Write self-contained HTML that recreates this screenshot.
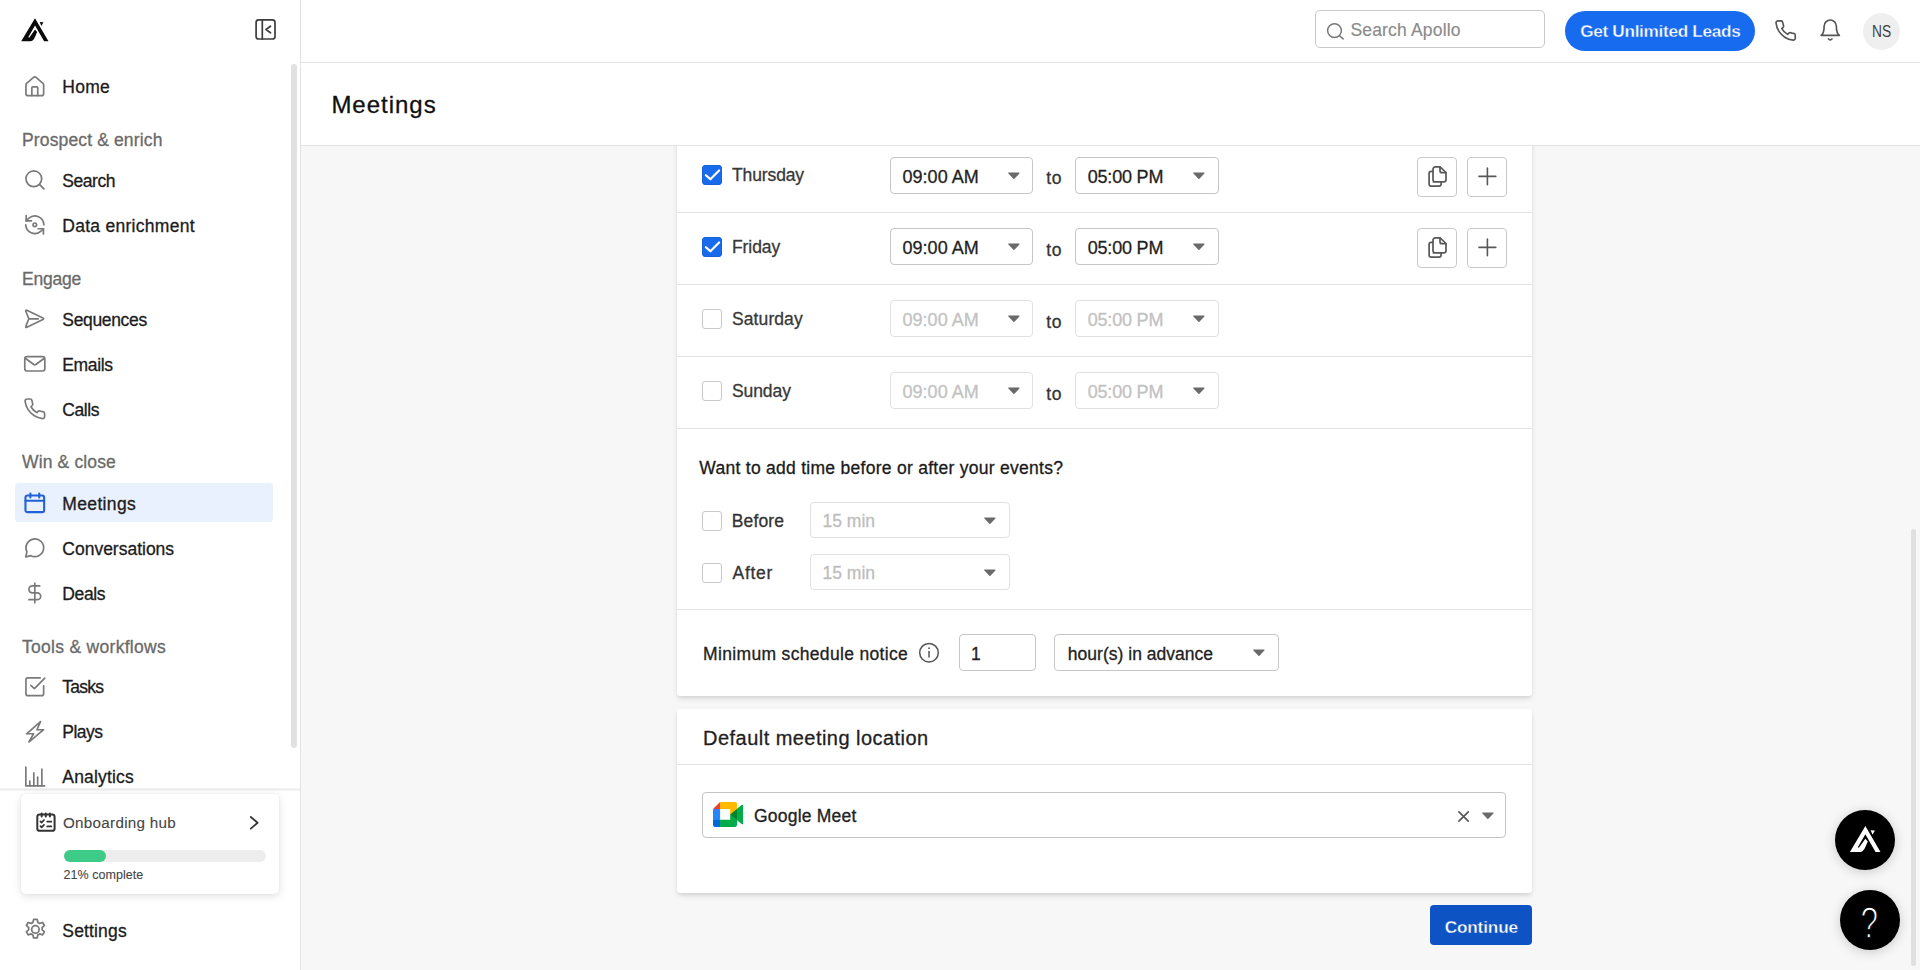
<!DOCTYPE html>
<html lang="en">
<head>
<meta charset="utf-8">
<title>Meetings - Apollo</title>
<style>
*{box-sizing:border-box;margin:0;padding:0}
html,body{width:1920px;height:970px;overflow:hidden;background:#f7f7f7;font-family:"Liberation Sans", sans-serif;color:#1a1a1a}
.abs{position:absolute}
.t{position:absolute;white-space:nowrap;line-height:20px;height:20px;-webkit-text-stroke:0.3px currentColor}
#sidebar{position:absolute;left:0;top:0;width:301px;height:970px;background:#fff;border-right:1px solid #e2e2e2}
#topbar{position:absolute;left:301px;top:0;width:1619px;height:63px;background:#fff;border-bottom:1px solid #e4e4e4}
#titlebar{position:absolute;left:301px;top:63px;width:1619px;height:83px;background:#fff;border-bottom:1px solid #e4e4e4}
#main{position:absolute;left:301px;top:146px;width:1619px;height:824px;overflow:hidden;background:#f7f7f7}
.card{position:absolute;background:#fff;border-radius:3px;box-shadow:0 3px 6px -1px rgba(0,0,0,.12),0 2px 3px rgba(0,0,0,.05)}
.sep{position:absolute;left:0;width:100%;height:1px;background:#e6e6e6}
.sel{position:absolute;background:#fff;border:1px solid #c6c6c6;border-radius:4px}
.sel.dis{border-color:#e1e1e1}
.caret{position:absolute;width:14px;height:10px}
.cb{position:absolute;width:20px;height:20px;border-radius:3px;background:#fff;border:1px solid #c9c9c9}
.cb.on{background:#1a6aec;border-color:#1762dc}
.ib{position:absolute;width:40px;height:40px;border:1px solid #c9c9c9;border-radius:4px;background:#fff}
#n_home{left:62.30px;top:77.00px;font-size:17.5px;color:#1c1c1c;font-weight:400;letter-spacing:0.278px;}
#n_search{left:62.30px;top:171.00px;font-size:17.5px;color:#1c1c1c;font-weight:400;letter-spacing:-0.442px;}
#n_data{left:62.30px;top:216.00px;font-size:17.5px;color:#1c1c1c;font-weight:400;letter-spacing:0.273px;}
#n_seq{left:62.30px;top:310.00px;font-size:17.5px;color:#1c1c1c;font-weight:400;letter-spacing:-0.342px;}
#n_emails{left:62.30px;top:355.00px;font-size:17.5px;color:#1c1c1c;font-weight:400;letter-spacing:-0.369px;}
#n_calls{left:62.30px;top:400.00px;font-size:17.5px;color:#1c1c1c;font-weight:400;letter-spacing:-0.421px;}
#n_meet{left:62.30px;top:494.00px;font-size:17.5px;color:#1c1c1c;font-weight:400;letter-spacing:0.348px;}
#n_conv{left:62.30px;top:539.00px;font-size:17.5px;color:#1c1c1c;font-weight:400;letter-spacing:-0.006px;}
#n_deals{left:62.30px;top:584.00px;font-size:17.5px;color:#1c1c1c;font-weight:400;letter-spacing:-0.390px;}
#n_tasks{left:62.30px;top:677.00px;font-size:17.5px;color:#1c1c1c;font-weight:400;letter-spacing:-0.787px;}
#n_plays{left:62.30px;top:722.00px;font-size:17.5px;color:#1c1c1c;font-weight:400;letter-spacing:-0.499px;}
#n_analytics{left:62.30px;top:767.00px;font-size:17.5px;color:#1c1c1c;font-weight:400;letter-spacing:0.163px;}
#n_settings{left:62.30px;top:921.00px;font-size:17.5px;color:#1c1c1c;font-weight:400;letter-spacing:0.158px;}
#s1{left:22.00px;top:130.00px;font-size:17.5px;color:#6a6a6a;font-weight:400;letter-spacing:0.140px;}
#s2{left:22.00px;top:269.00px;font-size:17.5px;color:#6a6a6a;font-weight:400;letter-spacing:-0.224px;}
#s3{left:22.00px;top:452.00px;font-size:17.5px;color:#6a6a6a;font-weight:400;letter-spacing:0.146px;}
#s4{left:22.00px;top:637.00px;font-size:17.5px;color:#6a6a6a;font-weight:400;letter-spacing:0.290px;}
#onb{left:63.00px;top:813.00px;font-size:15.2px;color:#454545;font-weight:400;letter-spacing:0.290px;-webkit-text-stroke:0.1px}
#pct{left:63.40px;top:865.00px;font-size:12.5px;color:#454545;font-weight:400;letter-spacing:0.065px;-webkit-text-stroke:0.1px}
#srch{left:1350.40px;top:20.00px;font-size:17.5px;color:#8a8a8a;font-weight:400;letter-spacing:0.177px;-webkit-text-stroke:0.15px}
#gul{left:1580.20px;top:21.00px;font-size:17.2px;color:#ffffff;font-weight:700;letter-spacing:-0.315px;-webkit-text-stroke:0.35px #176bef}
#ns{left:1872.00px;top:22.00px;font-size:15.8px;color:#3f3f3f;font-weight:400;letter-spacing:0.000px;-webkit-text-stroke:0;transform:scaleX(.87);transform-origin:0 0}
#title{left:331.40px;top:95.00px;font-size:24px;color:#111;font-weight:400;letter-spacing:0.989px;}
#d_thu{left:732.00px;top:165.00px;font-size:17.5px;color:#383838;font-weight:400;letter-spacing:-0.119px;}
#a_thu{left:902.50px;top:167.00px;font-size:18px;color:#1f1f1f;font-weight:400;letter-spacing:0.030px;}
#to_thu{left:1046.20px;top:168.00px;font-size:17.5px;color:#333;font-weight:400;letter-spacing:0.695px;}
#p_thu{left:1087.70px;top:167.00px;font-size:18px;color:#1f1f1f;font-weight:400;letter-spacing:-0.193px;}
#d_fri{left:732.00px;top:237.00px;font-size:17.5px;color:#383838;font-weight:400;letter-spacing:-0.088px;}
#a_fri{left:902.50px;top:238.00px;font-size:18px;color:#1f1f1f;font-weight:400;letter-spacing:0.030px;}
#to_fri{left:1046.20px;top:240.00px;font-size:17.5px;color:#333;font-weight:400;letter-spacing:0.695px;}
#p_fri{left:1087.70px;top:238.00px;font-size:18px;color:#1f1f1f;font-weight:400;letter-spacing:-0.193px;}
#d_sat{left:732.00px;top:309.00px;font-size:17.5px;color:#383838;font-weight:400;letter-spacing:0.094px;}
#a_sat{left:902.50px;top:310.00px;font-size:18px;color:#c2c2c2;font-weight:400;letter-spacing:0.030px;}
#to_sat{left:1046.20px;top:312.00px;font-size:17.5px;color:#333;font-weight:400;letter-spacing:0.695px;}
#p_sat{left:1087.70px;top:310.00px;font-size:18px;color:#c2c2c2;font-weight:400;letter-spacing:-0.193px;}
#d_sun{left:732.00px;top:381.00px;font-size:17.5px;color:#383838;font-weight:400;letter-spacing:-0.093px;}
#a_sun{left:902.50px;top:382.00px;font-size:18px;color:#c2c2c2;font-weight:400;letter-spacing:0.030px;}
#to_sun{left:1046.20px;top:384.00px;font-size:17.5px;color:#333;font-weight:400;letter-spacing:0.695px;}
#p_sun{left:1087.70px;top:382.00px;font-size:18px;color:#c2c2c2;font-weight:400;letter-spacing:-0.193px;}
#want{left:699.30px;top:458.00px;font-size:17.5px;color:#1a1a1a;font-weight:400;letter-spacing:0.278px;}
#before{left:731.80px;top:511.00px;font-size:17.5px;color:#333;font-weight:400;letter-spacing:0.123px;}
#after{left:732.60px;top:563.00px;font-size:17.5px;color:#333;font-weight:400;letter-spacing:0.666px;}
#m15a{left:822.50px;top:511.00px;font-size:17.5px;color:#bdbdbd;font-weight:400;letter-spacing:0.011px;}
#m15b{left:822.50px;top:563.00px;font-size:17.5px;color:#bdbdbd;font-weight:400;letter-spacing:0.011px;}
#msn{left:703.10px;top:644.00px;font-size:17.5px;color:#222;font-weight:400;letter-spacing:0.328px;}
#one{left:971.00px;top:644.00px;font-size:17.5px;color:#222;font-weight:400;letter-spacing:0.000px;}
#hrs{left:1067.80px;top:644.00px;font-size:17.5px;color:#222;font-weight:400;letter-spacing:0.019px;}
#dml{left:703.10px;top:728.00px;font-size:20px;color:#1f1f1f;font-weight:400;letter-spacing:0.455px;}
#gm{left:754.00px;top:806.00px;font-size:17.5px;color:#222;font-weight:400;letter-spacing:0.218px;}
#cont{left:1444.70px;top:917.00px;font-size:17.2px;color:#ffffff;font-weight:700;letter-spacing:-0.159px;-webkit-text-stroke:0.35px #0d53c4}
#q{left:1858.40px;top:914.00px;font-size:40.5px;color:#ffffff;font-weight:400;letter-spacing:0.000px;-webkit-text-stroke:1.2px #000;transform:scale(.78,1.08);transform-origin:50% 24px}
</style>
</head>
<body>
<div id="sidebar">
<svg class="abs" style="left:0;top:0;width:80px;height:60px" viewBox="0 0 80 60"><path fill="#0a0a0a" d="M35 18.3 L48.5 41.3 H44.1 L35 25.6 L28.3 37.2 L29.2 37.7 L35 29.5 L37.2 32 C35.2 36 34 41.3 30.3 41.3 H21.2 Z"/><path fill="#0a0a0a" d="M39.700 21.900 L43.500 22.200 L41.400 25.900 Z"/></svg>
<svg class="abs" style="left:250px;top:14px;width:32px;height:32px;fill:none;stroke:#3c3c3c;stroke-width:1.7;stroke-linecap:round;stroke-linejoin:round" viewBox="250 14 32 32"><rect x="256.100" y="19.800" width="18.900" height="19.200" rx="2.600"/><path d="M262.300 19.800v19.200"/><path d="M270.500 26.200l-4.500 3.300 4.500 3.300"/></svg>
<div class="abs" style="left:291.200px;top:64.200px;width:5.600px;height:683.500px;border-radius:3px;background:#e1e1e1"></div>
<div class="abs" style="left:15px;top:482.700px;width:258px;height:39.600px;border-radius:3.500px;background:#e8f1fd"></div>
<svg class="abs" style="left:23.20px;top:74.90px;width:23.6px;height:23.6px;fill:none;stroke-linecap:round;stroke-linejoin:round;stroke:#797979;stroke-width:1.7" viewBox="0 0 24 24"><path d="M15 21v-8a1 1 0 0 0-1-1h-4a1 1 0 0 0-1 1v8"/><path d="M3 10a2 2 0 0 1 .709-1.528l7-5.999a2 2 0 0 1 2.582 0l7 5.999A2 2 0 0 1 21 10v9a2 2 0 0 1-2 2H5a2 2 0 0 1-2-2z"/></svg>
<span class="t" id="n_home">Home</span>
<svg class="abs" style="left:23.20px;top:167.70px;width:23.6px;height:23.6px;fill:none;stroke-linecap:round;stroke-linejoin:round;stroke:#797979;stroke-width:1.7" viewBox="0 0 24 24"><circle cx="11" cy="11" r="8"/><path d="m21.3 21.3-4.6-4.6"/></svg>
<span class="t" id="n_search">Search</span>
<svg class="abs" style="left:23.20px;top:212.70px;width:23.6px;height:23.6px;fill:none;stroke-linecap:round;stroke-linejoin:round;stroke:#797979;stroke-width:1.7" viewBox="0 0 24 24"><path d="M3.2 2.600v5.400h5.400"/><path d="M21.200 12A9.200 9.200 0 0 0 6 5.300L3.200 8"/><path d="M20.800 21.400v-5.400h-5.400"/><path d="M2.800 12a9.200 9.200 0 0 0 15.200 6.700l2.800-2.700"/><circle cx="12" cy="12" r="1.800"/></svg>
<span class="t" id="n_data">Data enrichment</span>
<svg class="abs" style="left:23.20px;top:306.70px;width:23.6px;height:23.6px;fill:none;stroke-linecap:round;stroke-linejoin:round;stroke:#797979;stroke-width:1.7" viewBox="0 0 24 24"><path d="M3.900 3.400 L20.300 11.200 Q21.700 12 20.300 12.800 L3.900 20.600 Q2.400 21.200 2.900 19.700 L5.900 12 L2.900 4.300 Q2.400 2.800 3.900 3.400 Z"/><path d="M6.200 12h9.300"/></svg>
<span class="t" id="n_seq">Sequences</span>
<svg class="abs" style="left:23.20px;top:351.70px;width:23.6px;height:23.6px;fill:none;stroke-linecap:round;stroke-linejoin:round;stroke:#797979;stroke-width:1.7" viewBox="0 0 24 24"><rect width="20.400" height="14.600" x="1.800" y="4.700" rx="2.200"/><path d="m21.700 6.400-8.700 6.300a1.800 1.800 0 0 1-2 0L2.300 6.400"/></svg>
<span class="t" id="n_emails">Emails</span>
<svg class="abs" style="left:23.20px;top:396.70px;width:23.6px;height:23.6px;fill:none;stroke-linecap:round;stroke-linejoin:round;stroke:#797979;stroke-width:1.7" viewBox="0 0 24 24"><path d="M22 16.92v3a2 2 0 0 1-2.18 2 19.79 19.79 0 0 1-8.63-3.07 19.5 19.5 0 0 1-6-6 19.79 19.79 0 0 1-3.07-8.67A2 2 0 0 1 4.11 2h3a2 2 0 0 1 2 1.72 12.84 12.84 0 0 0 .7 2.81 2 2 0 0 1-.45 2.11L8.09 9.91a16 16 0 0 0 6 6l1.27-1.27a2 2 0 0 1 2.11-.45 12.84 12.84 0 0 0 2.81.7A2 2 0 0 1 22 16.92z"/></svg>
<span class="t" id="n_calls">Calls</span>
<svg class="abs" style="left:23.20px;top:490.70px;width:23.6px;height:23.6px;fill:none;stroke-linecap:round;stroke-linejoin:round;stroke:#2161d8;stroke-width:2.1" viewBox="0 0 24 24"><path d="M7.5 2.5v4"/><path d="M16.5 2.5v4"/><rect width="19" height="17" x="2.5" y="4.5" rx="2"/><path d="M2.5 10h19"/></svg>
<span class="t" id="n_meet">Meetings</span>
<svg class="abs" style="left:23.20px;top:535.70px;width:23.6px;height:23.6px;fill:none;stroke-linecap:round;stroke-linejoin:round;stroke:#797979;stroke-width:1.7" viewBox="0 0 24 24"><path d="M7.9 20A9 9 0 1 0 4 16.1L2.8 21.2Z"/></svg>
<span class="t" id="n_conv">Conversations</span>
<svg class="abs" style="left:23.20px;top:580.70px;width:23.6px;height:23.6px;fill:none;stroke-linecap:round;stroke-linejoin:round;stroke:#797979;stroke-width:1.7" viewBox="0 0 24 24"><path d="M12 2v20"/><path d="M17 5H9.5a3.5 3.5 0 0 0 0 7h5a3.5 3.5 0 0 1 0 7H6"/></svg>
<span class="t" id="n_deals">Deals</span>
<svg class="abs" style="left:23.20px;top:674.70px;width:23.6px;height:23.6px;fill:none;stroke-linecap:round;stroke-linejoin:round;stroke:#797979;stroke-width:1.7" viewBox="0 0 24 24"><path d="M21 11V19a2 2 0 0 1-2 2H5a2 2 0 0 1-2-2V5a2 2 0 0 1 2-2h12.5"/><path d="m8 10.5 3.6 3.4L22.2 3.2"/></svg>
<span class="t" id="n_tasks">Tasks</span>
<svg class="abs" style="left:23.20px;top:719.70px;width:23.6px;height:23.6px;fill:none;stroke-linecap:round;stroke-linejoin:round;stroke:#797979;stroke-width:1.7" viewBox="0 0 24 24"><path d="M17.8 1.6 3.6 14h7.2L6 22.4 21 9.9h-6.8z"/></svg>
<span class="t" id="n_plays">Plays</span>
<svg class="abs" style="left:23.20px;top:764.70px;width:23.6px;height:23.6px;fill:none;stroke-linecap:round;stroke-linejoin:round;stroke:#797979;stroke-width:1.7" viewBox="0 0 24 24"><path d="M2.9 2.2v19.1h19"/><path d="M6.9 21v-4.6"/><path d="M11 21V8"/><path d="M14.9 21v-8.6"/><path d="M19.2 21V4.2"/></svg>
<span class="t" id="n_analytics">Analytics</span>
<svg class="abs" style="left:22.80px;top:917.10px;width:24.8px;height:24.8px;fill:none;stroke-linecap:round;stroke-linejoin:round;stroke:#797979;stroke-width:1.7" viewBox="0 0 24 24"><circle cx="12" cy="12" r="3.6"/><path d="M10.3 2.3h3.4l.7 2.9 1.7 1 2.9-.9 1.7 2.9-2.2 2.1v2l2.2 2.100-1.7 2.900-2.900-.900-1.700 1-.700 2.900h-3.400l-.700-2.900-1.700-1-2.900.900-1.700-2.900 2.200-2.100v-2L3.300 8.200 5 5.300l2.900.9 1.700-1z"/></svg>
<span class="t" id="n_settings">Settings</span>
<span class="t" id="s1">Prospect &amp; enrich</span>
<span class="t" id="s2">Engage</span>
<span class="t" id="s3">Win &amp; close</span>
<span class="t" id="s4">Tools &amp; workflows</span>
<div class="abs" style="left:0;top:787.500px;width:300px;height:3.600px;background:linear-gradient(#f8f8f8,#ebebeb 45%,#f0f0f0 70%,#fbfbfb)"></div>
<div class="abs" style="left:21px;top:793.600px;width:258px;height:100.200px;background:#fff;border-radius:5px;box-shadow:0 2px 8px rgba(0,0,0,.13),0 0 2px rgba(0,0,0,.06)"></div>
<svg class="abs" style="left:30px;top:806px;width:32px;height:32px;fill:none;stroke:#333;stroke-width:2;stroke-linecap:round;stroke-linejoin:round" viewBox="30 806 32 32"><rect x="37.300" y="814.600" width="17.300" height="16.200" rx="2.400"/><path d="M41.700 813.500v3M45.800 813.500v3M49.900 813.500v3"/><path stroke-width="1.700" d="M40.400 821.400l1.200 1.200 2.400-2.600M40.400 826.200l1.200 1.200 2.400-2.600M47.200 821.600h4.200M47.200 826.400h4.200"/></svg>
<span class="t" id="onb">Onboarding hub</span>
<svg class="abs" style="left:244px;top:812px;width:20px;height:22px;fill:none;stroke:#333;stroke-width:1.800;stroke-linecap:round;stroke-linejoin:round" viewBox="244 812 20 22"><path d="M250.800 817l6.800 5.800-6.800 5.800"/></svg>
<div class="abs" style="left:63.700px;top:849.600px;width:202px;height:12px;border-radius:6px;background:#ededed"></div>
<div class="abs" style="left:63.700px;top:849.600px;width:42.400px;height:12px;border-radius:6px;background:#3ecb88"></div>
<span class="t" id="pct">21% complete</span>
</div>
<div id="topbar"></div>
<div class="abs" style="left:1315px;top:10.200px;width:229.800px;height:37.500px;border:1px solid #c9c9c9;border-radius:5px;background:#fff"></div>
<svg class="abs" style="left:1322px;top:19px;width:26px;height:24px;fill:none;stroke:#777;stroke-width:1.500;stroke-linecap:round" viewBox="1322 19 26 24"><circle cx="1334.500" cy="30.600" r="6.900"/><path d="M1339.600 35.700l3.500 3.200"/></svg>
<span class="t" id="srch">Search Apollo</span>
<div class="abs" style="left:1565px;top:11px;width:189.700px;height:40px;border-radius:20px;background:#176bef"></div>
<span class="t" id="gul">Get Unlimited Leads</span>
<svg class="abs" style="left:1773.90px;top:18.70px;width:23.2px;height:23.2px;fill:none;stroke-linecap:round;stroke-linejoin:round;stroke:#555;stroke-width:1.7" viewBox="0 0 24 24"><path d="M22 16.92v3a2 2 0 0 1-2.18 2 19.79 19.79 0 0 1-8.63-3.07 19.5 19.5 0 0 1-6-6 19.79 19.79 0 0 1-3.07-8.67A2 2 0 0 1 4.11 2h3a2 2 0 0 1 2 1.72 12.84 12.84 0 0 0 .7 2.81 2 2 0 0 1-.45 2.11L8.09 9.91a16 16 0 0 0 6 6l1.27-1.27a2 2 0 0 1 2.11-.45 12.84 12.84 0 0 0 2.81.7A2 2 0 0 1 22 16.92z"/></svg>
<svg class="abs" style="left:1817.95px;top:17.75px;width:24.5px;height:24.5px;fill:none;stroke-linecap:round;stroke-linejoin:round;stroke:#555;stroke-width:1.6" viewBox="0 0 24 24"><path d="M6 8a6 6 0 0 1 12 0c0 7 3 9 3 9H3s3-2 3-9"/><path d="M10.300 20.500a1.940 1.940 0 0 0 3.400 0"/></svg>
<div class="abs" style="left:1863px;top:12.500px;width:37px;height:37px;border-radius:50%;background:#efefef"></div>
<span class="t" id="ns">NS</span>
<div id="titlebar"></div>
<span class="t" id="title">Meetings</span>
<div id="main"></div>
<div class="abs" style="left:301px;top:146px;width:1619px;height:824px;overflow:hidden">
<div class="card" style="left:376px;top:-40px;width:855px;height:590px"></div>
<div class="card" style="left:376px;top:562.700px;width:855px;height:184px"></div>
</div>
<div class="abs" style="left:677px;top:212px;width:855px;height:1px;background:#e4e4e4"></div>
<div class="abs" style="left:677px;top:284px;width:855px;height:1px;background:#e4e4e4"></div>
<div class="abs" style="left:677px;top:356px;width:855px;height:1px;background:#e4e4e4"></div>
<div class="abs" style="left:677px;top:428px;width:855px;height:1px;background:#e4e4e4"></div>
<div class="abs" style="left:677px;top:609px;width:855px;height:1px;background:#e4e4e4"></div>
<div class="abs" style="left:677px;top:764px;width:855px;height:1px;background:#e4e4e4"></div>
<div class="cb on" style="left:702px;top:165.0px"></div>
<svg class="abs" style="left:702px;top:165.0px;width:20px;height:20px;fill:none;stroke:#fff;stroke-width:2.200;stroke-linecap:round;stroke-linejoin:round" viewBox="0 0 20 20"><path d="M3.900 10.200l4.500 4.100 8.700-8.800"/></svg>
<span class="t" id="d_thu">Thursday</span>
<div class="sel" style="left:890px;top:157.2px;width:142.500px;height:36.400px"></div>
<svg class="caret" style="left:1006.800px;top:170.8px" viewBox="0 0 14 10"><path d="M1.900 2.100h10L6.900 7.300z" fill="#6a6a6a" stroke="#6a6a6a" stroke-width="1.400" stroke-linejoin="round"/></svg>
<span class="t" id="a_thu">09:00 AM</span>
<span class="t" id="to_thu">to</span>
<div class="sel" style="left:1075px;top:157.2px;width:143.700px;height:36.400px"></div>
<svg class="caret" style="left:1192.100px;top:170.8px" viewBox="0 0 14 10"><path d="M1.900 2.100h10L6.900 7.300z" fill="#6a6a6a" stroke="#6a6a6a" stroke-width="1.400" stroke-linejoin="round"/></svg>
<span class="t" id="p_thu">05:00 PM</span>
<div class="ib" style="left:1417px;top:157.2px"></div>
<div class="ib" style="left:1467px;top:157.2px"></div>
<svg class="abs" style="left:1417px;top:157.2px;width:40px;height:40px;fill:none;stroke:#585858;stroke-width:1.700;stroke-linecap:round;stroke-linejoin:round" viewBox="1417 157.200 40 40"><path d="M1433.400 182.100h10.400a2.200 2.200 0 0 0 2.200-2.200v-7.200l-5.900-5.600h-4.900a2.200 2.200 0 0 0-2.200 2.200v10.600a2.200 2.200 0 0 0 2.400 2.200z"/><path d="M1440 167.200v3.700a2 2 0 0 0 2 2h3.900"/><path d="M1433 171.500h-1.700a2.200 2.200 0 0 0-2.200 2.200v10.400a2.200 2.200 0 0 0 2.200 2.200h7.600a2.200 2.200 0 0 0 2.200-2.200v-1.900"/></svg>
<svg class="abs" style="left:1467px;top:157.2px;width:40px;height:40px;fill:none;stroke:#585858;stroke-width:1.600;stroke-linecap:round" viewBox="1467 157.200 40 40"><path d="M1479 176.600h16.800M1487.400 168.300v16.600"/></svg>
<div class="cb on" style="left:702px;top:237.0px"></div>
<svg class="abs" style="left:702px;top:237.0px;width:20px;height:20px;fill:none;stroke:#fff;stroke-width:2.200;stroke-linecap:round;stroke-linejoin:round" viewBox="0 0 20 20"><path d="M3.900 10.200l4.500 4.100 8.700-8.800"/></svg>
<span class="t" id="d_fri">Friday</span>
<div class="sel" style="left:890px;top:228.3px;width:142.500px;height:36.400px"></div>
<svg class="caret" style="left:1006.800px;top:241.9px" viewBox="0 0 14 10"><path d="M1.900 2.100h10L6.900 7.300z" fill="#6a6a6a" stroke="#6a6a6a" stroke-width="1.400" stroke-linejoin="round"/></svg>
<span class="t" id="a_fri">09:00 AM</span>
<span class="t" id="to_fri">to</span>
<div class="sel" style="left:1075px;top:228.3px;width:143.700px;height:36.400px"></div>
<svg class="caret" style="left:1192.100px;top:241.9px" viewBox="0 0 14 10"><path d="M1.900 2.100h10L6.900 7.300z" fill="#6a6a6a" stroke="#6a6a6a" stroke-width="1.400" stroke-linejoin="round"/></svg>
<span class="t" id="p_fri">05:00 PM</span>
<div class="ib" style="left:1417px;top:228.4px"></div>
<div class="ib" style="left:1467px;top:228.4px"></div>
<svg class="abs" style="left:1417px;top:228.4px;width:40px;height:40px;fill:none;stroke:#585858;stroke-width:1.700;stroke-linecap:round;stroke-linejoin:round" viewBox="1417 157.200 40 40"><path d="M1433.400 182.100h10.400a2.200 2.200 0 0 0 2.200-2.200v-7.200l-5.900-5.600h-4.900a2.200 2.200 0 0 0-2.200 2.200v10.600a2.200 2.200 0 0 0 2.400 2.200z"/><path d="M1440 167.200v3.700a2 2 0 0 0 2 2h3.900"/><path d="M1433 171.500h-1.700a2.200 2.200 0 0 0-2.200 2.200v10.400a2.200 2.200 0 0 0 2.200 2.200h7.600a2.200 2.200 0 0 0 2.200-2.200v-1.900"/></svg>
<svg class="abs" style="left:1467px;top:228.4px;width:40px;height:40px;fill:none;stroke:#585858;stroke-width:1.600;stroke-linecap:round" viewBox="1467 157.200 40 40"><path d="M1479 176.600h16.800M1487.400 168.300v16.600"/></svg>
<div class="cb" style="left:702px;top:309.0px"></div>
<span class="t" id="d_sat">Saturday</span>
<div class="sel dis" style="left:890px;top:300.4px;width:142.500px;height:36.400px"></div>
<svg class="caret" style="left:1006.800px;top:314.0px" viewBox="0 0 14 10"><path d="M1.900 2.100h10L6.900 7.300z" fill="#6a6a6a" stroke="#6a6a6a" stroke-width="1.400" stroke-linejoin="round"/></svg>
<span class="t" id="a_sat">09:00 AM</span>
<span class="t" id="to_sat">to</span>
<div class="sel dis" style="left:1075px;top:300.4px;width:143.700px;height:36.400px"></div>
<svg class="caret" style="left:1192.100px;top:314.0px" viewBox="0 0 14 10"><path d="M1.900 2.100h10L6.900 7.300z" fill="#6a6a6a" stroke="#6a6a6a" stroke-width="1.400" stroke-linejoin="round"/></svg>
<span class="t" id="p_sat">05:00 PM</span>
<div class="cb" style="left:702px;top:381.0px"></div>
<span class="t" id="d_sun">Sunday</span>
<div class="sel dis" style="left:890px;top:372.4px;width:142.500px;height:36.400px"></div>
<svg class="caret" style="left:1006.800px;top:386.0px" viewBox="0 0 14 10"><path d="M1.900 2.100h10L6.900 7.300z" fill="#6a6a6a" stroke="#6a6a6a" stroke-width="1.400" stroke-linejoin="round"/></svg>
<span class="t" id="a_sun">09:00 AM</span>
<span class="t" id="to_sun">to</span>
<div class="sel dis" style="left:1075px;top:372.4px;width:143.700px;height:36.400px"></div>
<svg class="caret" style="left:1192.100px;top:386.0px" viewBox="0 0 14 10"><path d="M1.900 2.100h10L6.900 7.300z" fill="#6a6a6a" stroke="#6a6a6a" stroke-width="1.400" stroke-linejoin="round"/></svg>
<span class="t" id="p_sun">05:00 PM</span>
<span class="t" id="want">Want to add time before or after your events?</span>
<div class="cb" style="left:702.200px;top:511.2px"></div>
<span class="t" id="before">Before</span>
<div class="sel dis" style="left:810px;top:501.5px;width:199.700px;height:36px"></div>
<span class="t" id="m15a">15 min</span>
<svg class="caret" style="left:982.600px;top:516.1px" viewBox="0 0 14 10"><path d="M1.900 2.100h10L6.900 7.300z" fill="#6a6a6a" stroke="#6a6a6a" stroke-width="1.400" stroke-linejoin="round"/></svg>
<div class="cb" style="left:702.200px;top:563.2px"></div>
<span class="t" id="after">After</span>
<div class="sel dis" style="left:810px;top:553.5px;width:199.700px;height:36px"></div>
<span class="t" id="m15b">15 min</span>
<svg class="caret" style="left:982.600px;top:568.1px" viewBox="0 0 14 10"><path d="M1.900 2.100h10L6.900 7.300z" fill="#6a6a6a" stroke="#6a6a6a" stroke-width="1.400" stroke-linejoin="round"/></svg>
<span class="t" id="msn">Minimum schedule notice</span>
<svg class="abs" style="left:916px;top:640px;width:26px;height:26px;fill:none;stroke:#555;stroke-width:1.500;stroke-linecap:round" viewBox="916 640 26 26"><circle cx="929" cy="652.700" r="9.300"/><path d="M929 651.500v5.600"/><circle cx="929" cy="648.200" r=".9" fill="#555" stroke="none"/></svg>
<div class="sel" style="left:959px;top:634.300px;width:76.800px;height:36.400px"></div>
<span class="t" id="one">1</span>
<div class="sel" style="left:1054px;top:634.300px;width:225px;height:36.400px"></div>
<span class="t" id="hrs">hour(s) in advance</span>
<svg class="caret" style="left:1251.700px;top:648.300px" viewBox="0 0 14 10"><path d="M1.900 2.100h10L6.900 7.300z" fill="#6a6a6a" stroke="#6a6a6a" stroke-width="1.400" stroke-linejoin="round"/></svg>
<span class="t" id="dml">Default meeting location</span>
<div class="sel" style="left:702.300px;top:792.300px;width:804.200px;height:46px;border-color:#c4c4c4"></div>
<svg class="abs" style="left:712.900px;top:802.300px;width:30.300px;height:24.930px" viewBox="0 0 87.500 72"><path fill="#00832d" d="M49.500 36l8.530 9.750 11.470 7.330 2-17.020-2-16.640-11.690 6.440z"/><path fill="#0066da" d="M0 51.500V66c0 3.315 2.685 6 6 6h14.500l3-10.960-3-9.540-9.950-3z"/><path fill="#e94235" d="M20.500 0L0 20.500l10.550 3 9.950-3 2.950-9.410z"/><path fill="#2684fc" d="M20.500 20.500H0v31h20.500z"/><path fill="#00ac47" d="M82.600 8.680L69.500 19.420v33.660l13.160 10.790c1.970 1.540 4.850.135 4.850-2.370V11c0-2.535-2.945-3.925-4.910-2.320zM49.500 36v15.500h-29V72h43c3.315 0 6-2.685 6-6V53.080z"/><path fill="#ffba00" d="M63.500 0h-43v20.500h29V36l20-16.570V6c0-3.315-2.685-6-6-6z"/></svg>
<span class="t" id="gm">Google Meet</span>
<svg class="abs" style="left:1453px;top:806px;width:22px;height:22px;fill:none;stroke:#555;stroke-width:1.600;stroke-linecap:round" viewBox="1453 806 22 22"><path d="M1458.900 811.900l9.400 9.200M1468.300 811.900l-9.400 9.200"/></svg>
<svg class="caret" style="left:1480.800px;top:811.100px" viewBox="0 0 14 10"><path d="M1.900 2.100h10L6.900 7.300z" fill="#6a6a6a" stroke="#6a6a6a" stroke-width="1.400" stroke-linejoin="round"/></svg>
<div class="abs" style="left:1430.200px;top:905.200px;width:102px;height:39.600px;border-radius:4px;background:#0d53c4"></div>
<span class="t" id="cont">Continue</span>
<div class="abs" style="left:1835px;top:810px;width:60px;height:60px;border-radius:50%;background:#000;box-shadow:0 2px 12px rgba(0,0,0,.18)"></div>
<svg class="abs" style="left:1835px;top:810px;width:60px;height:60px" viewBox="0 0 60 60"><g transform="translate(30.200 29) scale(1.120) translate(-34.850 -29.800)" fill="#fff"><path d="M35 18.3 L48.5 41.3 H44.1 L35 25.6 L28.3 37.2 L29.2 37.7 L35 29.5 L37.2 32 C35.2 36 34 41.3 30.3 41.3 H21.2 Z"/><path d="M39.700 21.900 L43.500 22.200 L41.400 25.900 Z"/></g></svg>
<div class="abs" style="left:1840px;top:890px;width:60px;height:60px;border-radius:50%;background:#000;box-shadow:0 2px 12px rgba(0,0,0,.18)"></div>
<span class="t" id="q">?</span>
<div class="abs" style="left:1911.200px;top:529px;width:5.300px;height:437px;border-radius:3px;background:#e0e0e0"></div>
</body>
</html>
